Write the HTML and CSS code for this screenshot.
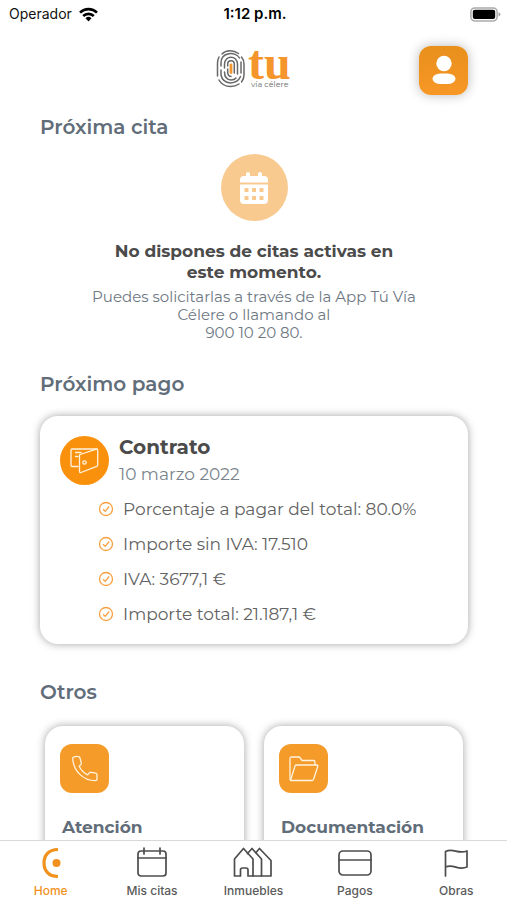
FILE: index.html
```html
<!DOCTYPE html>
<html lang="es">
<head>
<meta charset="utf-8">
<meta name="viewport" content="width=device-width, initial-scale=1">
<title>Tu Vía Célere</title>
<link rel="stylesheet" href="styles.css">
</head>
<body>
<div class="app">
  <div class="status">
    <div class="carrier">Operador
      <svg width="19" height="15" viewBox="0 0 19 15" aria-hidden="true"><g fill="none" stroke="#000" stroke-width="2.6"><path d="M1 5.600a12.200 12.200 0 0 1 17 0"/><path d="M4.200 9a7.600 7.600 0 0 1 10.600 0"/></g><path d="M9.500 14.500l-3-3.200a4.300 4.300 0 0 1 6 0z"/></svg>
    </div>
    <div class="clock">1:12 p.m.</div>
    <div class="battery">
      <svg width="31" height="15" viewBox="0 0 31 15" aria-hidden="true"><rect x=".9" y=".9" width="26.200" height="13" rx="3.800" fill="#fff" stroke="#aaa" stroke-width="1.500"/><rect x="2.800" y="2.800" width="22.400" height="9.200" rx="2"/><path d="M28.500 5.200q2 .6 2 2.200t-2 2.200z" fill="#aaa"/></svg>
    </div>
  </div>

  <header class="header">
    <svg class="logo" width="76" height="66" viewBox="0 -12 76 66" role="img" aria-label="tu vía célere">
      <g fill="none" stroke="#686868" stroke-width="1.500" stroke-linecap="round">
        <path d="M6 5C10 1 17 .5 22.500 4.500"/>
        <path d="M1.500 27V14q0-3 1.500-6"/><path d="M25.500 8Q28 11 28 15v11q0 4-2.500 7"/>
        <path d="M3 31q3.500 6.500 11.500 6.500 5 0 8.500-2.500"/>
        <path d="M5 17v-3C5 2.500 20 2.500 23.500 9"/><path d="M5 21v5q1.500 7.500 9.500 8 7.500-.5 10-6.500"/><path d="M25 13v11"/>
        <path d="M8.500 19v-4c0-9 13-9 13 0v10"/><path d="M8.500 23q0 7.500 6.500 8 3.500 0 5-2"/>
        <path d="M11.700 17v-2c0-4.500 6.600-4.500 6.600 0v9"/><path d="M11.700 20v4q.5 3.500 3.300 3.500"/>
      </g>
      <path d="M15 16v7.500" stroke="#f5962c" stroke-width="2.800" stroke-linecap="round"/>
      <text class="logo-name" x="32" y="30">tu</text>
      <text class="logo-sub" x="35" y="38">vía célere</text>
    </svg>
    <button class="profile" type="button" aria-label="Perfil">
      <svg width="26" height="30" viewBox="0 0 26 30" aria-hidden="true"><circle cx="13" cy="8.500" r="7.700" fill="#fff"/><rect x="1.500" y="18.500" width="23" height="10.500" rx="8" ry="5.200" fill="#fff"/></svg>
    </button>
  </header>

  <main class="content">
    <section class="appointment">
      <h2 class="section-title">Próxima cita</h2>
      <div class="empty">
        <div class="empty-icon">
          <svg width="30" height="34" viewBox="0 0 30 34" aria-hidden="true"><path fill="#fff" fill-rule="evenodd" d="M1 9q0-4 4-4h2V3q0-2 2-2t2 2v2h8V3q0-2 2-2t2 2v2h2q4 0 4 4v2.500H1zM1 13.500h28V29q0 4-4 4H5q-4 0-4-4zM5.500 17v4h4v-4zm7.500 0v4h4v-4zm7.500 0v4h4v-4zM5.500 25v4h4v-4zm7.500 0v4h4v-4zm7.500 0v4h4v-4z"/></svg>
        </div>
        <h3 class="empty-title">No dispones de citas activas en<br>este momento.</h3>
        <p class="empty-text">Puedes solicitarlas a través de la App Tú Vía<br>Célere o llamando al<br>900 10 20 80.</p>
      </div>
    </section>

    <section class="payment">
      <h2 class="section-title">Próximo pago</h2>
      <article class="card pay-card">
        <div class="pay-head">
          <div class="pay-icon">
            <svg width="29" height="27" viewBox="0 0 29 27" fill="none" stroke="#fff3df" stroke-width="1.300" stroke-linejoin="round" stroke-linecap="round" aria-hidden="true"><path d="M8 19.500H2q-1 0-1-1V3q0-1 1-1h25"/><path d="M10 7.500l16.500-5.300q1.200-.3 1.200 1V18q0 1-1 1.300L11 25.500q-1.500.4-1.500-1V8.500q0-.8.5-1z"/><circle cx="14.500" cy="15.500" r="1.700"/><path d="M5.500 5.500H11M5.500 9.500H8"/></svg>
          </div>
          <div>
            <h3 class="pay-name">Contrato</h3>
            <p class="pay-date">10 marzo 2022</p>
          </div>
        </div>
        <ul class="details">
          <li><svg class="tick" viewBox="0 0 16 16" aria-hidden="true"><circle cx="8" cy="8" r="6.500"/><path d="M5 8.300l2.200 2 4-4.800"/></svg>Porcentaje a pagar del total: 80.0%</li>
          <li><svg class="tick" viewBox="0 0 16 16" aria-hidden="true"><circle cx="8" cy="8" r="6.500"/><path d="M5 8.300l2.200 2 4-4.800"/></svg>Importe sin IVA: 17.510</li>
          <li><svg class="tick" viewBox="0 0 16 16" aria-hidden="true"><circle cx="8" cy="8" r="6.500"/><path d="M5 8.300l2.200 2 4-4.800"/></svg>IVA: 3677,1 €</li>
          <li><svg class="tick" viewBox="0 0 16 16" aria-hidden="true"><circle cx="8" cy="8" r="6.500"/><path d="M5 8.300l2.200 2 4-4.800"/></svg>Importe total: 21.187,1 €</li>
        </ul>
      </article>
    </section>

    <section class="others">
      <h2 class="section-title">Otros</h2>
      <div class="tiles">
        <a class="card tile" href="#atencion">
          <span class="tile-icon"><svg width="28" height="28" viewBox="0 0 28 28" fill="none" stroke="#fff3df" stroke-width="1.300" stroke-linejoin="round" aria-hidden="true"><path d="M3 1.800Q6 1 8.500 1.800 9.500 4.500 10.300 8q.2 1-.6 1.800l-1.500 1.400q2.500 5.500 8.500 8.700l1.700-2q.7-.8 1.800-.6l4.500.8q1.300.3 1.300 1.600v4.500q0 1.300-1.500 1.500C12 25.800 2.200 15.500 1.700 3.300q0-1.200 1.300-1.500z"/></svg></span>
          <span class="tile-name">Atención</span>
        </a>
        <a class="card tile" href="#documentacion">
          <span class="tile-icon"><svg width="30" height="26" viewBox="0 0 30 26" fill="none" stroke="#fff3df" stroke-width="1.300" stroke-linejoin="round" aria-hidden="true"><path d="M1 24V2.500Q1 1 2.500 1h8l2.500 3.500h11.500Q26 4.500 26 6v3"/><path d="M1.500 24.500L6 10q.4-1 1.400-1H28q1.200 0 .8 1.200l-4.300 13.300q-.3 1-1.500 1z"/></svg></span>
          <span class="tile-name">Documentación</span>
        </a>
      </div>
    </section>
  </main>

  <nav class="tabs" aria-label="Principal">
    <a class="tab active" href="#home" aria-current="page">
      <svg width="32" height="32" viewBox="0 0 32 32" aria-hidden="true"><path d="M23 2.500C13 2.500 9 9 9 16s4 13.500 14 13.500" fill="none" stroke="#f0921d" stroke-width="3.200"/><circle cx="21.500" cy="16" r="4" fill="#f0921d"/></svg>
      <span>Home</span></a>
    <a class="tab" href="#citas">
      <svg class="line" width="32" height="32" viewBox="0 0 32 32" aria-hidden="true"><rect x="2" y="4" width="28" height="25" rx="3"/><path d="M2 11h28M8 1v6M24 1v6"/></svg>
      <span>Mis citas</span></a>
    <a class="tab" href="#inmuebles">
      <svg class="line" width="40" height="32" viewBox="0 0 40 32" aria-hidden="true"><path d="M1.500 29V12L10.500 1.500 20 12v17h-5v-6q0-2-2-2H9.500q-2 0-2 2v6z"/><path d="M14.500 6.500l4.500-5L28.500 12v17H20"/><path d="M23 5.500l3.500-4L38 13.500V29h-9.500"/></svg>
      <span>Inmuebles</span></a>
    <a class="tab" href="#pagos">
      <svg class="line" width="36" height="32" viewBox="0 0 36 32" aria-hidden="true"><rect x="2" y="4" width="32" height="24" rx="4"/><path d="M2 13h32"/></svg>
      <span>Pagos</span></a>
    <a class="tab" href="#obras">
      <svg class="line" width="26" height="32" viewBox="0 0 26 32" aria-hidden="true"><path d="M2.500 29V4.500c8-4 12 3 21.500-.5V20c-9.500 4-12.500-3.500-21.500 0"/></svg>
      <span>Obras</span></a>
  </nav>
</div>
</body>
</html>
```

FILE: styles.css
```css
* { box-sizing: border-box; }

body {
  margin: 0;
  background: #fff;
  color: #4b4b4b;
  font-family: Montserrat, Inter, "Liberation Sans", sans-serif;
}

h2, h3, p, ul { margin: 0; padding: 0; }
a { color: inherit; text-decoration: none; }
svg { display: block; flex: none; }

.app {
  display: flex;
  flex-direction: column;
  height: 100vh;
  overflow: hidden;
}

/* Status bar */
.status {
  display: grid;
  grid-template-columns: 1fr auto 1fr;
  align-items: center;
  height: 28px;
  padding: 0 6px 0 9px;
  font: 14px/20px Inter, sans-serif;
  color: #111;
}
.carrier { display: flex; align-items: center; gap: 7px; }
.clock { font-size: 15px; font-weight: 600; color: #000; }
.battery { justify-self: end; }

/* Header */
.header {
  display: grid;
  grid-template-columns: 1fr auto 1fr;
  align-items: center;
  padding: 9px 39px 0 40px;
}
.logo { grid-column: 2; }
.logo-name { font: bold 48px "Liberation Serif", serif; fill: #f5962c; }
.logo-sub { font: 8px Montserrat, Inter, sans-serif; fill: #686868; }
.profile {
  justify-self: end;
  display: grid;
  place-items: center;
  width: 49px;
  height: 49px;
  padding: 0;
  border: 0;
  border-radius: 12px;
  background: linear-gradient(#e88f1c, #f79726);
  box-shadow: 0 0 12px rgba(0, 0, 0, .28);
}

/* Content */
.content {
  flex: 1;
  min-height: 0;
  overflow: hidden;
  padding: 11px 39px 0 40px;
}
.section-title {
  font-size: 20px;
  line-height: 26px;
  font-weight: 600;
  color: #616d79;
}
.empty {
  display: flex;
  flex-direction: column;
  align-items: center;
  padding-top: 14px;
  text-align: center;
}
.empty-icon {
  display: grid;
  place-items: center;
  width: 67px;
  height: 67px;
  border-radius: 50%;
  background: #f9ca90;
}
.empty-title {
  margin-top: 20px;
  font-size: 17px;
  line-height: 21px;
  font-weight: 700;
}
.empty-text {
  margin-top: 5px;
  font-size: 15px;
  line-height: 18px;
  color: #6e7883;
}

.card {
  border-radius: 18px;
  background: #fff;
  box-shadow: 0 0 9px rgba(0, 0, 0, .36);
}
.payment { margin-top: 29px; }
.pay-card { margin-top: 19px; padding: 17px 20px 13px; }
.pay-head { display: flex; align-items: center; gap: 10px; }
.pay-icon {
  display: grid;
  place-items: center;
  width: 49px;
  height: 49px;
  border-radius: 50%;
  background: #fa910d;
}
.pay-name { font-size: 20px; line-height: 28px; font-weight: 700; }
.pay-date { font-size: 17px; line-height: 26px; color: #7a848c; }
.details {
  padding: 4px 0 0 38px;
  list-style: none;
  font-size: 17px;
  color: #626262;
}
.details li {
  display: flex;
  align-items: center;
  gap: 9px;
  height: 35px;
}
.tick {
  width: 16px;
  height: 16px;
  fill: none;
  stroke: #f7a040;
  stroke-width: 1.3;
}

.others { margin-top: 35px; }
.tiles {
  display: grid;
  grid-template-columns: 1fr 1fr;
  gap: 20px;
  padding: 21px 5px 0;
}
.tile {
  display: flex;
  flex-direction: column;
  gap: 22px;
  height: 150px;
  padding: 18px 15px;
}
.tile-icon {
  display: grid;
  place-items: center;
  width: 49px;
  height: 49px;
  border-radius: 12px;
  background: #f59b2a;
}
.tile-name {
  padding-left: 2px;
  font-size: 17px;
  line-height: 24px;
  font-weight: 700;
  color: #616d79;
}

/* Tab bar */
.tabs {
  display: grid;
  grid-template-columns: repeat(5, 1fr);
  height: 60px;
  border-top: 1px solid #d9d9d9;
  background: #fff;
}
.tab {
  display: flex;
  flex-direction: column;
  align-items: center;
  gap: 4px;
  padding-top: 6px;
  font: 500 12px/16px Inter, sans-serif;
  color: #5a5a5a;
}
.active { color: #f0921d; }
.line { fill: none; stroke: #4d4d4d; stroke-width: 1.7; stroke-linejoin: round; stroke-linecap: round; }
```
